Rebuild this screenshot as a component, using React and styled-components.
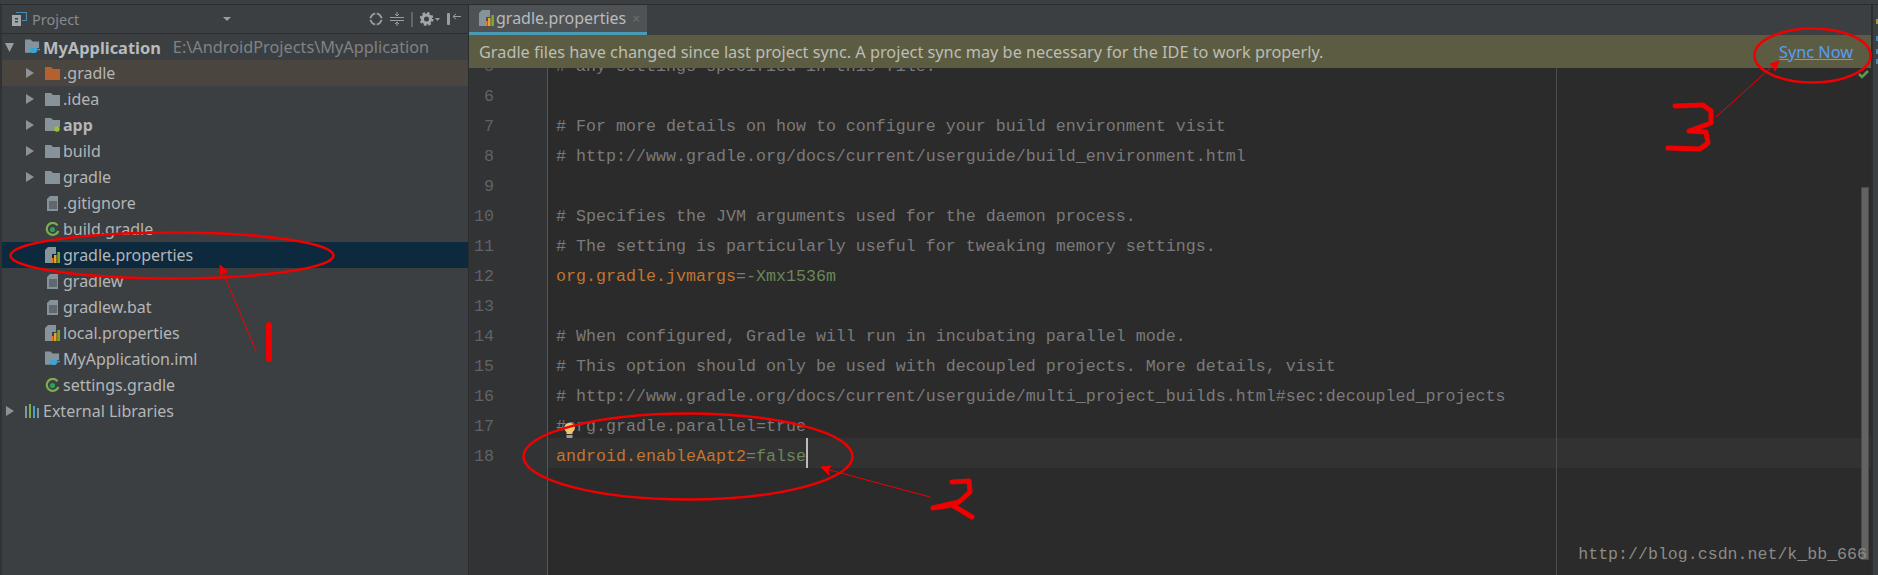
import React from "react"
import styled, { createGlobalStyle } from "styled-components"

const GlobalStyle = createGlobalStyle`
  html, body {
    margin: 0;
    padding: 0;
    background: #3c3f41;
  }
`

const UI_FONT = `"Noto Sans", "Open Sans", "Liberation Sans", sans-serif`
const CODE_FONT = `"Liberation Mono", "DejaVu Sans Mono", monospace`

const Page = styled.div`
  position: relative;
  display: flex;
  flex-direction: column;
  width: 1878px;
  height: 575px;
  overflow: hidden;
  background: #3c3f41;
  font-family: ${UI_FONT};
`

const TopEdge = styled.div`
  flex: none;
  height: 4px;
  background: #3c3f41;
  border-bottom: 1px solid #2b2d2e;
`

const Workspace = styled.div`
  flex: 1;
  display: flex;
  min-height: 0;
`

/* Project tool window */
const Sidebar = styled.aside`
  flex: none;
  box-sizing: border-box;
  width: 469px;
  border-left: 2px solid #303234;
  border-right: 1px solid #2b2d2e;
  background: #3c3f41;
`

const ToolBar = styled.div`
  display: flex;
  align-items: center;
  box-sizing: border-box;
  height: 29px;
  padding: 0 7px 0 10px;
  border-bottom: 1px solid #2b2d2e;
`

const ToolTitle = styled.div`
  display: flex;
  align-items: center;
  gap: 5px;
  width: 219px;
  color: #858a8d;
  font-size: 14.5px;
`

const Caret = styled.span`
  width: 0;
  height: 0;
  margin-left: auto;
  border-left: 4px solid transparent;
  border-right: 4px solid transparent;
  border-top: 4px solid #9a9da0;
`

const ToolActions = styled.div`
  display: flex;
  align-items: center;
  gap: 7px;
  margin-left: auto;
`

const ToolDivider = styled.span`
  width: 2px;
  height: 15px;
  background: #62666a;
`

const TreeRow = styled.div`
  display: flex;
  align-items: center;
  box-sizing: border-box;
  height: 26px;
  padding-left: ${(p) => (p.$child ? 22 : 2)}px;
  background: ${(p) => p.$bg || "transparent"};
  color: #b3b5b6;
  font-size: 16px;
  white-space: nowrap;
`

const ArrowSlot = styled.span`
  flex: none;
  display: flex;
  width: 21px;
`

const IconSlot = styled.span`
  flex: none;
  display: flex;
  justify-content: center;
  width: 15px;
  margin-right: 3px;
`

const RootName = styled.span`
  font-size: 16.4px;
  font-weight: 700;
  color: #b8babb;
`

const RootPath = styled.span`
  margin-left: 12px;
  font-size: 16.3px;
  color: #7f8386;
`

const BoldName = styled.span`
  font-weight: 700;
`

/* Editor */
const Editor = styled.main`
  flex: 1;
  display: flex;
  flex-direction: column;
  min-width: 0;
  background: #2b2b2b;
`

const TabBar = styled.div`
  flex: none;
  display: flex;
  height: 30px;
  background: #3c3f41;
`

const Tab = styled.div`
  display: flex;
  align-items: center;
  gap: 2px;
  box-sizing: border-box;
  width: 178px;
  padding: 0 0 1px 10px;
  background: #4e5254;
  border-bottom: 3px solid #4a9ab5;
  color: #b9bbbc;
  font-size: 16px;
`

const TabClose = styled.span`
  margin-left: 4px;
  color: #6b6f72;
  font-size: 14px;
`

const Banner = styled.div`
  flex: none;
  position: relative;
  z-index: 1;
  display: flex;
  align-items: center;
  justify-content: space-between;
  box-sizing: border-box;
  height: 33px;
  padding: 0 18px 0 10px;
  background: #5c5c42;
  color: #bcbdb4;
  font-size: 16.3px;
`

const SyncLink = styled.a`
  color: #589df6;
  text-decoration: underline;
`

const EditorBody = styled.div`
  position: relative;
  flex: 1;
  display: flex;
  min-height: 0;
  overflow: hidden;
  font-family: ${CODE_FONT};
  font-size: 16.67px;
`

const Gutter = styled.div`
  flex: none;
  box-sizing: border-box;
  width: 79px;
  height: calc(100% + 20px);
  margin-top: -20px;
  padding-right: 53px;
  background: #313335;
  border-right: 1px solid #555759;
  color: #606366;
  text-align: right;
`

const Code = styled.div`
  flex: 1;
  margin-top: -20px;
  color: #7a7a7a;
`

const LineNo = styled.div`
  box-sizing: border-box;
  height: 30px;
  padding-top: 9px;
  line-height: 19px;
`

const Line = styled.div`
  position: relative;
  box-sizing: border-box;
  height: 30px;
  padding: 9px 0 0 8px;
  line-height: 19px;
  white-space: pre;
  background: ${(p) => (p.$active ? "#323232" : "transparent")};
`

const Key = styled.span`
  color: #c07530;
`

const Value = styled.span`
  color: #6a8759;
`

const TextCaret = styled.span`
  position: absolute;
  top: 0;
  left: 258px;
  width: 2px;
  height: 30px;
  background: #bbbbbb;
`

const Bulb = styled.svg`
  position: absolute;
  top: 15px;
  left: 16px;
`

const RightMargin = styled.div`
  position: absolute;
  top: 0;
  bottom: 0;
  left: 1087px;
  width: 1px;
  background: #4d4d4d;
`

const ScrollThumb = styled.div`
  position: absolute;
  top: 119px;
  left: 1392px;
  width: 8px;
  height: 373px;
  background: #636363;
  border: 1px solid #4a4a4a;
  box-sizing: border-box;
`

const CheckMark = styled.svg`
  position: absolute;
  top: 2px;
  left: 1389px;
`

const RightStrip = styled.div`
  flex: none;
  display: flex;
  flex-direction: column;
  align-items: flex-end;
  box-sizing: border-box;
  width: 7px;
  padding-top: 14px;
  background: #3c3f41;
  border-left: 2px solid #2b2d2e;
`

const StripMark = styled.span`
  width: 2px;
  height: ${(p) => p.$h}px;
  margin-bottom: ${(p) => p.$gap}px;
  background: ${(p) => p.$color};
`

/* Things drawn over the screenshot by hand */
const Annotations = styled.svg`
  position: absolute;
  top: 0;
  left: 0;
  z-index: 2;
  pointer-events: none;
`

const Watermark = styled.div`
  position: absolute;
  top: 545px;
  right: 11px;
  z-index: 2;
  color: #8a8a85;
  font-family: ${CODE_FONT};
  font-size: 16.6px;
  line-height: 20px;
`

const ArrowIcon = ({ down }) => (
  <svg width="12" height="12" viewBox="0 0 12 12">
    {down ? (
      <path d="M1 2h9l-4.500 9z" fill="#9a9da0" />
    ) : (
      <path d="M2 1l8 5-8 5z" fill="#8f9294" />
    )}
  </svg>
)

const FolderIcon = ({ color = "#87939a" }) => (
  <svg width="15" height="13" viewBox="0 0 15 13">
    <path d="M0 0h6l2 2h7v11H0z" fill={color} />
  </svg>
)

const AppFolderIcon = () => (
  <svg width="15" height="14" viewBox="0 0 15 14">
    <path d="M0 0h6l2 2h7v7h-5v4H0z" fill="#87939a" />
    <circle cx="12" cy="11" r="2.700" fill="#9ac230" />
  </svg>
)

const ModuleIcon = () => (
  <svg width="16" height="16" viewBox="0 0 16 16">
    <path d="M0 0h6l2 2h7v7H6v5H0z" fill="#87939a" />
    <path d="M5 9h8v2.500c0 2-1.500 3-3 3H8c-1.500 0-3-1-3-3z" fill="#3fa3cf" />
    <path d="M13 10h3v1.500h-3z" fill="#3fa3cf" />
  </svg>
)

const FileIcon = () => (
  <svg width="12" height="15" viewBox="0 0 12 15">
    <path d="M3 0h8v15H0V3z" fill="#87939a" />
    <path d="M2 6h8M2 8h8M2 10h8M2 12h8" stroke="#3c3f41" strokeWidth="1" />
  </svg>
)

const PropsIcon = () => (
  <svg width="15" height="16" viewBox="0 0 15 16">
    <path d="M3 0h8v7H7v9H0V3z" fill="#87939a" />
    <path d="M6 11h2.500v5H6z" fill="#e6792a" />
    <path d="M9 8h2.500v8H9z" fill="#e6a22a" />
    <path d="M12.300 5H15v11h-2.700z" fill="#77a72c" />
  </svg>
)

const GradleIcon = () => (
  <svg width="15" height="15" viewBox="0 0 15 15">
    <path d="M12.500 3.200A6 6 0 1 0 13.400 9" fill="none" stroke="#7cae4f" strokeWidth="2.200" />
    <circle cx="7.500" cy="7.500" r="2.600" fill="#2f9e58" />
  </svg>
)

const LibrariesIcon = () => (
  <svg width="15" height="14" viewBox="0 0 15 14">
    <path d="M0 2h2v12H0z" fill="#87939a" />
    <path d="M4 0h2v14H4z" fill="#78b04a" />
    <path d="M8 2h2v12H8z" fill="#3fa3cf" />
    <path d="M12 4h2v10h-2z" fill="#87939a" />
  </svg>
)

const ProjectIcon = () => (
  <svg width="15" height="14" viewBox="0 0 15 14">
    <path d="M4 0.500h10.500v8H10" fill="none" stroke="#4a88b0" strokeWidth="1.200" />
    <path d="M0 3h9v11H0z" fill="#a3a6a8" />
    <path d="M3 6h3v1.500H3zM3 9h3v1.500H3z" fill="#3c3f41" />
  </svg>
)

const LocateIcon = () => (
  <svg width="14" height="14" viewBox="0 0 14 14">
    <circle cx="7" cy="7" r="5.500" fill="none" stroke="#9a9da0" strokeWidth="2" />
    <path d="M7 0v4M7 10v4M0 7h4M10 7h4" stroke="#3c3f41" strokeWidth="1.500" />
  </svg>
)

const CollapseIcon = () => (
  <svg width="14" height="14" viewBox="0 0 14 14" fill="none" stroke="#9a9da0">
    <path d="M0 5.500h14M0 8.500h14M7 0v3.500M5 2l2 2 2-2M7 14v-3.500M5 12l2-2 2 2" />
  </svg>
)

const GearIcon = () => (
  <svg width="20" height="14" viewBox="0 0 20 14">
    <circle cx="6.500" cy="7" r="4" fill="none" stroke="#a3a6a8" strokeWidth="3" />
    <circle cx="6.500" cy="7" r="6" fill="none" stroke="#a3a6a8" strokeWidth="2" strokeDasharray="2.500 2.200" />
    <path d="M15 6h5l-2.500 3z" fill="#9a9da0" />
  </svg>
)

const HideIcon = () => (
  <svg width="14" height="14" viewBox="0 0 14 14" fill="none" stroke="#9a9da0">
    <path d="M0.500 1.500h2v11h-2z" fill="#9a9da0" />
    <path d="M14 4.500H6M9 2L6 4.500 9 7" />
  </svg>
)

const BulbIcon = () => (
  <Bulb width="11" height="16" viewBox="0 0 11 16">
    <path d="M5.500 0a5 5 0 0 1 3 9.200V11h-6V9.200a5 5 0 0 1 3-9.200z" fill="#f3c46b" />
    <path d="M2.500 12h6v3h-6z" fill="#9a9da0" />
  </Bulb>
)

const tree = [
  { name: ".gradle", arrow: true, icon: <FolderIcon color="#b5602f" />, bg: "#4a453e" },
  { name: ".idea", arrow: true, icon: <FolderIcon /> },
  { name: "app", arrow: true, bold: true, icon: <AppFolderIcon /> },
  { name: "build", arrow: true, icon: <FolderIcon /> },
  { name: "gradle", arrow: true, icon: <FolderIcon /> },
  { name: ".gitignore", icon: <FileIcon /> },
  { name: "build.gradle", icon: <GradleIcon /> },
  { name: "gradle.properties", icon: <PropsIcon />, bg: "#0d293e" },
  { name: "gradlew", icon: <FileIcon /> },
  { name: "gradlew.bat", icon: <FileIcon /> },
  { name: "local.properties", icon: <PropsIcon /> },
  { name: "MyApplication.iml", icon: <ModuleIcon /> },
  { name: "settings.gradle", icon: <GradleIcon /> },
]

const codeLines = [
  { no: 5, text: "# any settings specified in this file." },
  { no: 6, text: "" },
  { no: 7, text: "# For more details on how to configure your build environment visit" },
  { no: 8, text: "# http://www.gradle.org/docs/current/userguide/build_environment.html" },
  { no: 9, text: "" },
  { no: 10, text: "# Specifies the JVM arguments used for the daemon process." },
  { no: 11, text: "# The setting is particularly useful for tweaking memory settings." },
  { no: 12, prop: ["org.gradle.jvmargs", "-Xmx1536m"] },
  { no: 13, text: "" },
  { no: 14, text: "# When configured, Gradle will run in incubating parallel mode." },
  { no: 15, text: "# This option should only be used with decoupled projects. More details, visit" },
  { no: 16, text: "# http://www.gradle.org/docs/current/userguide/multi_project_builds.html#sec:decoupled_projects" },
  { no: 17, text: "#org.gradle.parallel=true", bulb: true },
  { no: 18, prop: ["android.enableAapt2", "false"], active: true },
]

export default function App() {
  return (
    <Page>
      <GlobalStyle />
      <TopEdge />
      <Workspace>
        <Sidebar>
          <ToolBar>
            <ToolTitle>
              <ProjectIcon />
              Project
              <Caret />
            </ToolTitle>
            <ToolActions>
              <LocateIcon />
              <CollapseIcon />
              <ToolDivider />
              <GearIcon />
              <HideIcon />
            </ToolActions>
          </ToolBar>
          <TreeRow>
            <ArrowSlot>
              <ArrowIcon down />
            </ArrowSlot>
            <IconSlot>
              <ModuleIcon />
            </IconSlot>
            <RootName>MyApplication</RootName>
            <RootPath>E:\AndroidProjects\MyApplication</RootPath>
          </TreeRow>
          {tree.map((item) => (
            <TreeRow key={item.name} $child $bg={item.bg}>
              <ArrowSlot>{item.arrow && <ArrowIcon />}</ArrowSlot>
              <IconSlot>{item.icon}</IconSlot>
              {item.bold ? <BoldName>{item.name}</BoldName> : item.name}
            </TreeRow>
          ))}
          <TreeRow>
            <ArrowSlot>
              <ArrowIcon />
            </ArrowSlot>
            <IconSlot>
              <LibrariesIcon />
            </IconSlot>
            External Libraries
          </TreeRow>
        </Sidebar>

        <Editor>
          <TabBar>
            <Tab>
              <PropsIcon />
              gradle.properties
              <TabClose>×</TabClose>
            </Tab>
          </TabBar>
          <Banner>
            Gradle files have changed since last project sync. A project sync may be necessary for the IDE to work properly.
            <SyncLink>Sync Now</SyncLink>
          </Banner>
          <EditorBody>
            <Gutter>
              {codeLines.map((l) => (
                <LineNo key={l.no}>{l.no}</LineNo>
              ))}
            </Gutter>
            <Code>
              {codeLines.map((l) => (
                <Line key={l.no} $active={l.active}>
                  {l.prop ? (
                    <>
                      <Key>{l.prop[0]}</Key>=<Value>{l.prop[1]}</Value>
                    </>
                  ) : (
                    l.text
                  )}
                  {l.bulb && <BulbIcon />}
                  {l.active && <TextCaret />}
                </Line>
              ))}
            </Code>
            <RightMargin />
            <ScrollThumb />
            <CheckMark width="11" height="9" viewBox="0 0 11 9">
              <path d="M1 4l3 3 6-6" fill="none" stroke="#5f9a4c" strokeWidth="2.500" />
            </CheckMark>
          </EditorBody>
        </Editor>

        <RightStrip>
          <StripMark $h={5} $gap={12} $color="#9a9a3c" />
          <StripMark $h={5} $gap={8} $color="#4a88b0" />
          <StripMark $h={5} $gap={5} $color="#4a88b0" />
          <StripMark $h={5} $gap={0} $color="#4a88b0" />
        </RightStrip>
      </Workspace>

      <Watermark>http://blog.csdn.net/k_bb_666</Watermark>

      <Annotations width="1878" height="575" viewBox="0 0 1878 575" fill="none" stroke="#f00000">
        <ellipse cx="172" cy="255.500" rx="161.500" ry="23" strokeWidth="2.500" />
        <path d="M256 351L222 270" strokeWidth="1" />
        <path d="M220 265l8 7-6 1-1 5z" fill="#f00000" strokeWidth="1" />
        <path d="M269 325v34" strokeWidth="6" strokeLinecap="round" />

        <ellipse cx="688" cy="456.500" rx="164.500" ry="43" strokeWidth="2.500" />
        <path d="M930 497L826 469" strokeWidth="1" />
        <path d="M821 467l10-1-3 4 1 5z" fill="#f00000" strokeWidth="1" />
        <path
          d="M952 482l17-1 1 11-11 10-26 6 19-3 20 12"
          strokeWidth="5"
          strokeLinecap="round"
          strokeLinejoin="round"
        />

        <ellipse cx="1812.500" cy="55.500" rx="58" ry="27" strokeWidth="2.500" />
        <path d="M1716 117l60-54" strokeWidth="1" />
        <path d="M1779 61l-9 3 4 2 1 5z" fill="#f00000" strokeWidth="1" />
        <path
          d="M1675 106l28-1 8 6v12l-22 8 17 1 2 11-8 6-32-1"
          strokeWidth="5"
          strokeLinecap="round"
          strokeLinejoin="round"
        />
      </Annotations>
    </Page>
  )
}
